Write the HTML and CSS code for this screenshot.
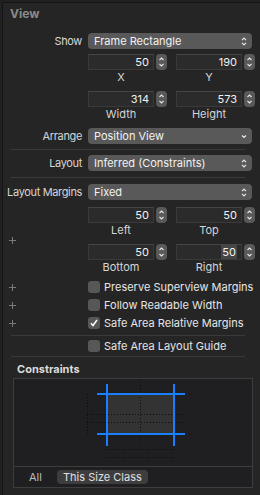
FILE: index.html
```html
<!DOCTYPE html>
<html lang="en">

<head>
    <meta charset="UTF-8">
    <meta name="viewport" content="width=device-width, initial-scale=1.0">
    <title>View Inspector</title>
    <link rel="stylesheet" href="styles.css">
</head>

<body>
    <div class="panel">
        <div class="title">View</div>

        <div class="row show-row">
            <div class="label">Show</div>
            <div class="popup">
                <span>Frame Rectangle</span>
                <svg class="updown" width="6" height="9" viewBox="0 0 6 9"><path d="M1 3.2 L3 1.2 L5 3.2 M1 5.8 L3 7.8 L5 5.8" /></svg>
            </div>
        </div>

        <div class="row fields">
            <div class="label"></div>
            <div class="pair">
                <div class="num"><div class="field">50</div><div class="stepper"><svg width="11" height="16" viewBox="0 0 11 16"><path d="M3.5 6 L5.5 4 L7.5 6 M3.5 10 L5.5 12 L7.5 10" /></svg></div></div>
                <div class="num"><div class="field">190</div><div class="stepper"><svg width="11" height="16" viewBox="0 0 11 16"><path d="M3.5 6 L5.5 4 L7.5 6 M3.5 10 L5.5 12 L7.5 10" /></svg></div></div>
            </div>
        </div>
        <div class="row caps">
            <div class="label"></div>
            <div class="pair">
                <div class="cap">X</div>
                <div class="cap">Y</div>
            </div>
        </div>

        <div class="row fields f2">
            <div class="label"></div>
            <div class="pair">
                <div class="num"><div class="field">314</div><div class="stepper"><svg width="11" height="16" viewBox="0 0 11 16"><path d="M3.5 6 L5.5 4 L7.5 6 M3.5 10 L5.5 12 L7.5 10" /></svg></div></div>
                <div class="num"><div class="field">573</div><div class="stepper"><svg width="11" height="16" viewBox="0 0 11 16"><path d="M3.5 6 L5.5 4 L7.5 6 M3.5 10 L5.5 12 L7.5 10" /></svg></div></div>
            </div>
        </div>
        <div class="row caps">
            <div class="label"></div>
            <div class="pair">
                <div class="cap">Width</div>
                <div class="cap">Height</div>
            </div>
        </div>

        <div class="row arrange-row">
            <div class="label">Arrange</div>
            <div class="popup">
                <span>Position View</span>
                <svg class="down" width="6" height="5" viewBox="0 0 6 5"><path d="M1 1.5 L3 3.5 L5 1.5" /></svg>
            </div>
        </div>

        <div class="sep"></div>

        <div class="row">
            <div class="label">Layout</div>
            <div class="popup">
                <span>Inferred (Constraints)</span>
                <svg class="updown" width="6" height="9" viewBox="0 0 6 9"><path d="M1 3.2 L3 1.2 L5 3.2 M1 5.8 L3 7.8 L5 5.8" /></svg>
            </div>
        </div>

        <div class="sep sep2"></div>

        <div class="row">
            <div class="label">Layout Margins</div>
            <div class="popup">
                <span>Fixed</span>
                <svg class="updown" width="6" height="9" viewBox="0 0 6 9"><path d="M1 3.2 L3 1.2 L5 3.2 M1 5.8 L3 7.8 L5 5.8" /></svg>
            </div>
        </div>

        <div class="row margins">
            <div class="label plus-col">
                <svg class="plus" width="7" height="7" viewBox="0 0 7 7"><path d="M3.5 0 V7 M0 3.5 H7" /></svg>
            </div>
            <div class="margin-grid">
                <div class="pair mf1">
                    <div class="num"><div class="field">50</div><div class="stepper"><svg width="11" height="16" viewBox="0 0 11 16"><path d="M3.5 6 L5.5 4 L7.5 6 M3.5 10 L5.5 12 L7.5 10" /></svg></div></div>
                    <div class="num"><div class="field">50</div><div class="stepper"><svg width="11" height="16" viewBox="0 0 11 16"><path d="M3.5 6 L5.5 4 L7.5 6 M3.5 10 L5.5 12 L7.5 10" /></svg></div></div>
                </div>
                <div class="pair caps2">
                    <div class="cap">Left</div>
                    <div class="cap">Top</div>
                </div>
                <div class="pair mf2">
                    <div class="num"><div class="field">50</div><div class="stepper"><svg width="11" height="16" viewBox="0 0 11 16"><path d="M3.5 6 L5.5 4 L7.5 6 M3.5 10 L5.5 12 L7.5 10" /></svg></div></div>
                    <div class="num"><div class="field"><span class="sel">50</span></div><div class="stepper"><svg width="11" height="16" viewBox="0 0 11 16"><path d="M3.5 6 L5.5 4 L7.5 6 M3.5 10 L5.5 12 L7.5 10" /></svg></div></div>
                </div>
                <div class="pair caps2">
                    <div class="cap">Bottom</div>
                    <div class="cap">Right</div>
                </div>
            </div>
        </div>

        <div class="checks">
            <div class="row check-row">
                <div class="label plus-col"><svg class="plus" width="7" height="7" viewBox="0 0 7 7"><path d="M3.5 0 V7 M0 3.5 H7" /></svg></div>
                <div class="box"></div>
                <span class="check-text">Preserve Superview Margins</span>
            </div>
            <div class="row check-row">
                <div class="label plus-col"><svg class="plus" width="7" height="7" viewBox="0 0 7 7"><path d="M3.5 0 V7 M0 3.5 H7" /></svg></div>
                <div class="box"></div>
                <span class="check-text">Follow Readable Width</span>
            </div>
            <div class="row check-row">
                <div class="label plus-col"><svg class="plus" width="7" height="7" viewBox="0 0 7 7"><path d="M3.5 0 V7 M0 3.5 H7" /></svg></div>
                <div class="box checked"><svg width="12" height="12" viewBox="0 0 12 12"><path d="M3 6.3 L5 8.5 L9 3" /></svg></div>
                <span class="check-text">Safe Area Relative Margins</span>
            </div>
        </div>

        <div class="sep sep3"></div>

        <div class="row check-row salg">
            <div class="label"></div>
            <div class="box"></div>
            <span class="check-text">Safe Area Layout Guide</span>
        </div>

        <div class="sep sep4"></div>

        <div class="subtitle">Constraints</div>

        <div class="cbox">
            <div class="diagram">
                <svg width="238" height="87" viewBox="0 0 238 87">
                    <rect x="93.5" y="15.5" width="67" height="40" fill="#333333" stroke="#4a4a4a" />
                    <g class="dots">
                        <path d="M126.5 0 V65" />
                        <path d="M73.5 15 V56" />
                        <path d="M73 35.5 H171" />
                        <path d="M73 43.5 H171" />
                        <path d="M93 70.5 H161" />
                        <path d="M93 78.5 H161" />
                    </g>
                    <g class="blue">
                        <path d="M93 5 V67" />
                        <path d="M160 5 V67" />
                        <path d="M83 15 H171" />
                        <path d="M83 55 H171" />
                    </g>
                </svg>
            </div>
            <div class="cbar">
                <span class="all">All</span>
                <span class="size-btn">This Size Class</span>
            </div>
        </div>
    </div>
</body>

</html>
```

FILE: styles.css
```css
* {
    margin: 0;
    padding: 0;
    box-sizing: border-box;
}

body {
    background-color: #202020;
    font-family: Inter, "Liberation Sans", sans-serif;
    font-size: 11px;
    color: #dedede;
    overflow: hidden;
}

.panel {
    width: 258px;
    height: 493px;
    margin: 2px 0 0 2px;
    border-top: 1px solid #141414;
    border-left: 1px solid #141414;
    background-color: #252525;
}

.title {
    height: 22px;
    line-height: 22px;
    padding-left: 7px;
    font-weight: 700;
    font-size: 12px;
    color: #8a8a8a;
}

.row {
    display: flex;
    align-items: center;
}

.label {
    width: 79px;
    flex-shrink: 0;
    margin-right: 6px;
    display: flex;
    justify-content: flex-end;
    white-space: nowrap;
    letter-spacing: -0.35px;
    color: #d6d6d6;
}

.show-row {
    margin-top: 8px;
}

.popup {
    width: 164px;
    height: 16px;
    border-radius: 4px;
    background-color: #595959;
    color: #f2f2f2;
    display: flex;
    align-items: center;
    justify-content: space-between;
    padding: 0 5px 0 6px;
}

.popup svg path {
    fill: none;
    stroke: #e6e6e6;
    stroke-width: 1.2;
}

.pair {
    display: flex;
    gap: 9px;
}

.num {
    display: flex;
    gap: 2px;
}

.field {
    width: 66px;
    height: 16px;
    background-color: #2b2b2b;
    border: 1px solid #3a3a3a;
    border-top-color: #454545;
    text-align: right;
    padding-right: 4px;
    line-height: 14px;
    color: #f2f2f2;
}

.sel {
    background-color: #464646;
    padding: 0 1px;
}

.stepper {
    width: 11px;
    height: 16px;
    border-radius: 4px;
    background-color: #595959;
}

.stepper svg {
    display: block;
}

.stepper path {
    fill: none;
    stroke: #e6e6e6;
    stroke-width: 1.1;
}

.fields {
    margin-top: 5px;
}

.f2 {
    margin-top: 6px;
}

.cap {
    width: 79px;
    padding-right: 13px;
    text-align: center;
    line-height: 15px;
    color: #d6d6d6;
}

.arrange-row {
    margin-top: 6px;
}

.sep {
    height: 1px;
    margin: 5px 15px 5px 8px;
    background-color: #3a3a3a;
}

.sep2 {
    margin-top: 6px;
    margin-bottom: 6px;
}

.margins {
    margin-top: 7px;
}

.plus-col {
    align-items: center;
    justify-content: flex-start;
    padding-left: 6px;
}

.plus path {
    stroke: #7a7a7a;
    stroke-width: 1;
}

.caps2 .cap {
    line-height: 14px;
}

.mf2 {
    margin-top: 7px;
}

.checks {
    margin-top: 4px;
}

.check-row {
    height: 18px;
}

.box {
    width: 12px;
    height: 12px;
    border-radius: 3px;
    background-color: #575757;
    margin-right: 4px;
    flex-shrink: 0;
}

.box svg {
    display: block;
}

.box path {
    fill: none;
    stroke: #ffffff;
    stroke-width: 1.5;
}

.check-text {
    color: #e6e6e6;
    white-space: nowrap;
}

.sep3 {
    margin-top: 3px;
    margin-bottom: 1px;
}

.sep4 {
    margin-top: 1px;
    margin-bottom: 0;
}

.subtitle {
    height: 21px;
    line-height: 24px;
    padding-left: 14px;
    font-weight: 700;
    color: #dcdcdc;
}

.cbox {
    width: 240px;
    height: 110px;
    margin-left: 10px;
    border: 1px solid #3d3d3d;
    background-color: #1f1f21;
}

.diagram {
    height: 87px;
}

.diagram svg {
    display: block;
}

.dots path {
    fill: none;
    stroke: #0c0c0c;
    stroke-width: 1;
    stroke-dasharray: 1 2;
}

.blue path {
    fill: none;
    stroke: #1a7fff;
    stroke-width: 2;
}

.cbar {
    height: 21px;
    border-top: 1px solid #3d3d3d;
    display: flex;
    align-items: center;
    padding-left: 15px;
}

.all {
    color: #bcbcbc;
    width: 28px;
}

.size-btn {
    height: 14px;
    line-height: 14px;
    padding: 0 6px;
    white-space: nowrap;
    border-radius: 4px;
    background-color: #3d3d3d;
    color: #e0e0e0;
}
```
